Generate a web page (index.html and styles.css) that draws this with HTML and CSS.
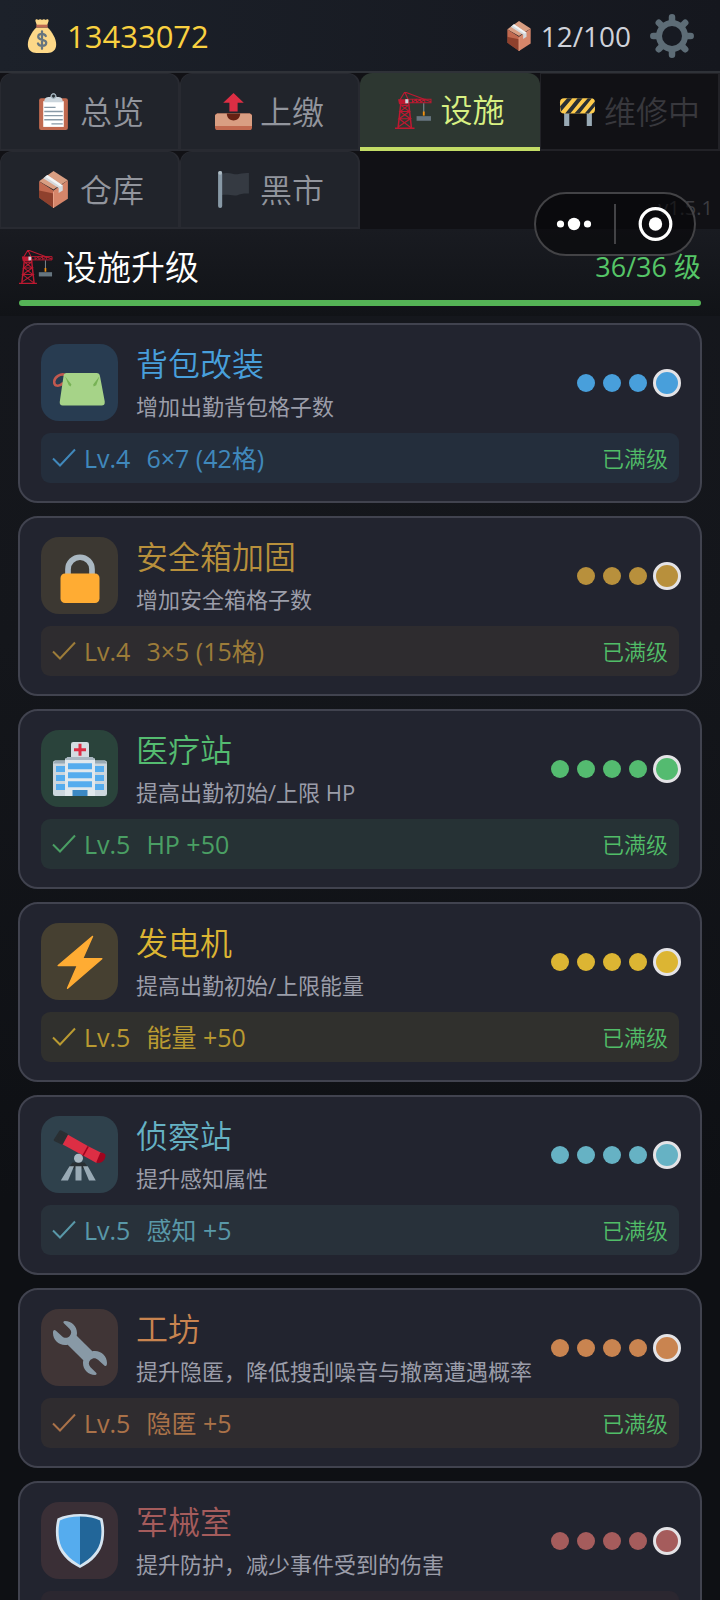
FILE: index.html
```html
<!DOCTYPE html>
<html lang="zh-CN">
<head>
<meta charset="utf-8">
<meta name="viewport" content="width=device-width, initial-scale=1">
<title>设施升级</title>
<link rel="stylesheet" href="styles.css">
</head>
<body>
<svg class="sprite" aria-hidden="true">
  <symbol id="i-money" viewBox="0 0 36 36">
    <path fill="#fdd888" d="M12 9h12c5 5 9 12 9 18 0 6-4 9-9 9H12c-5 0-9-3-9-9 0-6 4-13 9-18z"/>
    <path fill="#fdd888" d="M11 2c0-2 2-2 3-1 1-1 3-1 4 0 1-1 3-1 4 0 1-1 3-1 3 1l-2 6H13z"/>
    <path fill="#bf6952" d="M12 6h12v3H12z"/>
    <path fill="none" stroke="#67757f" stroke-width="2.400" stroke-linecap="round" d="M22 18c-.8-1.700-2.300-2.300-4-2.300-2.200 0-4 1-4 3 0 4.500 8.500 2.200 8.500 6.500 0 2.200-2.200 3.300-4.500 3.300-2 0-3.700-.9-4.300-2.600M18 13v18.500"/>
  </symbol>
  <symbol id="i-box" viewBox="0 0 36 36">
    <path fill="#d99e82" d="M18 0l14 9-14 9L4 10z"/>
    <path fill="#c1694f" d="M4 10l14 9v17L4 26z"/>
    <path fill="#662113" opacity=".55" d="M4 19l14 3v14L4 26z"/>
    <path fill="#d6866a" d="M32 9L18 19v17l14-9z"/>
    <path fill="#d4d9dd" d="M12 4L8 7l15 9.500v5l4-2.500v-5z"/>
    <path fill="#f3f5f6" d="M12 4l-2 1.500L24.500 15l2.500-1z"/>
    <path stroke="#e7a086" stroke-width="1" d="M18 20v16"/>
  </symbol>
  <symbol id="i-gear" viewBox="0 0 44 44">
    <g stroke="#5d6c76" stroke-width="6.500" stroke-linecap="round">
      <path d="M22 3.300v37.400M3.300 22h37.400M8.800 8.800l26.400 26.400M35.200 8.800L8.800 35.200"/>
    </g>
    <circle cx="22" cy="22" r="16" fill="#5d6c76"/>
    <circle cx="22" cy="22" r="10" fill="#171a22"/>
  </symbol>
  <symbol id="i-clip" viewBox="0 0 36 36">
    <rect x="4" y="5" width="28" height="31" rx="2" fill="#c1694f"/>
    <path fill="#fff" d="M8 8h20v25H8z"/>
    <path fill="#ccd6dd" d="M9 9c0-4 2-5 5-5h1c0-5 6-5 6 0h1c3 0 5 1 5 5z"/>
    <circle cx="18" cy="3" r="2" fill="#292f33" stroke="#99aab5"/>
    <path stroke="#8899a6" stroke-width="1.300" d="M9 14h11M9 18h18M9 22h18M9 26h18M16 30h11"/>
  </symbol>
  <symbol id="i-outbox" viewBox="0 0 36 36">
    <rect y="20" width="36" height="16" rx="2.500" fill="#c1694f"/>
    <path fill="#d99e82" d="M2 20h32l2 2v10H0V22z"/>
    <path fill="#662113" d="M11.500 20h13c0 9-13 9-13 0z"/>
    <path fill="#dd2e44" d="M18 0l10 9.500h-6V18h-8V9.500H8z"/>
  </symbol>
  <symbol id="i-crane" viewBox="0 0 36 36">
    <g fill="none" stroke="#be1931">
      <path stroke-width="1.500" d="M6 8L3 35M13 8l3 27M0 35.300h19"/>
      <path stroke-width="1.100" d="M6 13h7l-8 6h9L4 26h11L3 34M5 19l10 7M4 26l12 9M6 13l8 6M9.500 0L4 9M9.500 0L35 9.500M9.500 0l4 9"/>
      <path stroke-width="1" d="M13 7h22v3.500H13M17 7v3l4-3v3l4-3v3l4-3v3"/>
    </g>
    <path fill="#be1931" d="M3 7h9v5H4z"/>
    <path fill="#ccd6dd" d="M10 7h3v4h-3z"/>
    <path stroke="#99aab5" stroke-width=".8" d="M28 11v9"/>
    <path stroke="#f4900c" stroke-width="1.800" d="M28 19v4"/>
    <path fill="#66757f" d="M21 23.500h14V28H21z"/>
  </symbol>
  <symbol id="i-barrier" viewBox="0 0 36 36">
    <path fill="#99aab5" d="M5 19h5v13H5zM27 19h5v13h-5z"/>
    <rect x="1" y="5" width="34" height="15" rx="4" fill="#ffcc4d"/>
    <path fill="#292f33" d="M8 5h5L2 18l-1-5zM18 5h5L11 20H6zM28 5h4L20 20h-5zM35 8v5l-6 7h-4z"/>
  </symbol>
  <symbol id="i-flag" viewBox="0 0 36 36">
    <path fill="#353a42" d="M6 3c8-3 12 1 17 0 4-1 7-1 10-1v20c-5 0-7 0-11 1.500-5 1-9-1-16 0z"/>
    <rect x="3" width="4" height="36" rx="2" fill="#8899a6"/>
    <circle cx="5" cy="1.800" r="1.800" fill="#aebbc3"/>
  </symbol>
  <symbol id="i-pouch" viewBox="0 0 36 36">
    <path fill="none" stroke="#c1594f" stroke-width="1.700" d="M8 12.500c-3-1-7 1.500-7.200 4.500-.2 3 3 4 6 1"/>
    <path fill="#a6d388" d="M9 11.300h20c1.500 0 2 .7 2.300 2l3.200 17c.2 2-.8 2.700-2 2.700H6.500c-1.500 0-2.200-1-2-2.500l2.500-17c.2-1.500.8-2.200 2-2.200z"/>
    <path fill="#77b255" d="M8 13.500l4.300 5.500-.6 1.300-1.200-.8zM31 13.500L26.800 19l.3 1.300 1.700-.8z"/>
  </symbol>
  <symbol id="i-lock" viewBox="0 0 36 36">
    <path fill="none" stroke="#aab8c2" stroke-width="3.800" d="M10 18v-4.500a8 8 0 0 1 16 0V18"/>
    <rect x="5" y="16.300" width="26" height="19.700" rx="3" fill="#ffac33"/>
  </symbol>
  <symbol id="i-hospital" viewBox="0 0 36 36">
    <rect x="12" width="12" height="14" rx="1.500" fill="#d5dce1"/>
    <path fill="#dd2e44" d="M17 1.200h2v3h3v2h-3v3h-2v-3h-3v-2h3z"/>
    <rect y="12.300" width="36" height="23.700" rx="1.500" fill="#ccd6dd"/>
    <path fill="#99aab5" d="M1.500 12.300h33l1.500 2H0z"/>
    <path fill="#e1e8ed" d="M8 11h20v25H8z"/>
    <path fill="#aab8c2" d="M9.500 10h17l1.500 2H8z"/>
    <path fill="#55acee" d="M2 16h6v4H2zM2 22h6v4H2zM2 28h6v4H2zM28 16h6v4h-6zM28 22h6v4h-6zM28 28h6v4h-6zM10 14.200h16v4H10zM10 20.200h16v4H10zM10 26.200h16v4H10z"/>
    <path fill="#3b88c3" d="M13 32h10v4H13z"/>
  </symbol>
  <symbol id="i-bolt" viewBox="0 0 36 36">
    <path fill="#ffac33" stroke="#ffac33" stroke-linejoin="round" d="M26.300 1L3.500 20.300H16.300L9.700 35.500 32.500 15.800H19.700z"/>
  </symbol>
  <symbol id="i-scope" viewBox="0 0 36 36">
    <path stroke="#292f33" stroke-width="2" stroke-linejoin="round" fill="#292f33" d="M5 2.500L9 4.500 5.800 10 1.500 8z"/>
    <path fill="#dd2e44" d="M10 4.500l13.500 7.700L20 18.400 6.500 11z"/>
    <path fill="#dd2e44" d="M23.500 12.200l9 4.500-3.500 6.600-9-4.900z"/>
    <path stroke="#a0041e" d="M23.500 12.200L20 18.400"/>
    <path fill="#a0041e" d="M31.500 16.500c3 0 4 1 3.300 3-.6 2.500-3 4.500-6 3.500z"/>
    <path fill="#292f33" d="M13 23h8l3 4H10z"/>
    <circle cx="17" cy="20.200" r="3" fill="#aab8c2"/>
    <path fill="#99aab5" d="M11 25.500h3L10 35H5.200zM15 25.500h4V35h-4zM20 25.500h3.200L28.500 35h-4.500z"/>
  </symbol>
  <symbol id="i-wrench" viewBox="0 0 36 36">
    <path fill="#8899a6" d="M28 20c-.6 0-1.200.1-1.800.2L15.800 9.800c.1-.6.200-1.200.200-1.800 0-4.400-3.600-8-8-8-1.200.1-1.400 1-.6 1.700L11 5.200c1.500 1.500 1.500 3.300 0 4.900-1.600 1.500-3.500 1.500-5 0L1.800 6.400C.8 5.700 0 6 0 8c0 4.400 3.600 8 8 8 .6 0 1.200-.1 1.800-.2l10.400 10.400c-.1.600-.2 1.200-.2 1.800 0 4.400 3.600 8 8 8 1.200-.1 1.400-1 .6-1.700L25 30.800c-1.500-1.500-1.500-3.300 0-4.900 1.600-1.500 3.500-1.500 5 0l4.200 3.700c1 .7 1.800.4 1.800-1.600 0-4.400-3.600-8-8-8z"/>
  </symbol>
  <symbol id="i-shield" viewBox="0 0 36 36">
    <path fill="#d5e4f0" d="M18 0c6 0 11 1 15 3 1 4 1.500 8 .7 14C32.500 26 26 32 18 36 10 32 3.500 26 2.300 17 1.500 11 2 7 3 3c4-2 9-3 15-3z"/>
    <path fill="#226699" d="M18 1.700c5.500 0 10 1 13.400 2.600.9 4 1.200 7.700.5 12.400C30.800 24.500 25 30 18 34z"/>
    <path fill="#55acee" d="M18 1.700C12.500 1.700 8 2.700 4.600 4.300c-.9 4-1.200 7.700-.5 12.400C5.200 24.500 11 30 18 34z"/>
  </symbol>
  <symbol id="i-tick" viewBox="0 0 24 24">
    <path fill="none" stroke="currentColor" stroke-width="2" d="M1 12.500l7 7L23 3.500"/>
  </symbol>
</svg>

<div class="app">
  <header class="topbar">
    <div class="money"><svg class="money-icon"><use href="#i-money"/></svg><span>13433072</span></div>
    <div class="stock"><svg class="stock-icon"><use href="#i-box"/></svg><span>12/100</span></div>
    <button class="settings" aria-label="设置"><svg class="gear"><use href="#i-gear"/></svg></button>
  </header>

  <nav class="tabs">
    <button class="tab"><svg class="emoji"><use href="#i-clip"/></svg>总览</button>
    <button class="tab"><svg class="emoji"><use href="#i-outbox"/></svg>上缴</button>
    <button class="tab active"><svg class="emoji"><use href="#i-crane"/></svg>设施</button>
    <button class="tab disabled" disabled><svg class="emoji"><use href="#i-barrier"/></svg>维修中</button>
    <button class="tab"><svg class="emoji"><use href="#i-box"/></svg>仓库</button>
    <button class="tab"><svg class="emoji"><use href="#i-flag"/></svg>黑市</button>
    <span class="version">v1.5.1</span>
  </nav>

  <section class="summary">
    <div class="summary-row">
      <h1 class="heading"><svg class="heading-icon"><use href="#i-crane"/></svg>设施升级</h1>
      <span class="total">36/36 级</span>
    </div>
    <div class="progress"></div>
  </section>

  <main class="list">
    <article class="card blue">
      <div class="card-top">
        <div class="badge"><svg class="badge-icon"><use href="#i-pouch"/></svg></div>
        <div class="info"><h2 class="name">背包改装</h2><p class="desc">增加出勤背包格子数</p></div>
        <div class="dots"><i class="dot"></i><i class="dot"></i><i class="dot"></i><i class="dot now"></i></div>
      </div>
      <div class="status"><span class="effect"><svg class="tick"><use href="#i-tick"/></svg><span class="level">Lv.4</span><span>6×7 (42格)</span></span><span class="maxed">已满级</span></div>
    </article>
    <article class="card bronze">
      <div class="card-top">
        <div class="badge"><svg class="badge-icon"><use href="#i-lock"/></svg></div>
        <div class="info"><h2 class="name">安全箱加固</h2><p class="desc">增加安全箱格子数</p></div>
        <div class="dots"><i class="dot"></i><i class="dot"></i><i class="dot"></i><i class="dot now"></i></div>
      </div>
      <div class="status"><span class="effect"><svg class="tick"><use href="#i-tick"/></svg><span class="level">Lv.4</span><span>3×5 (15格)</span></span><span class="maxed">已满级</span></div>
    </article>
    <article class="card green">
      <div class="card-top">
        <div class="badge"><svg class="badge-icon"><use href="#i-hospital"/></svg></div>
        <div class="info"><h2 class="name">医疗站</h2><p class="desc">提高出勤初始/上限 HP</p></div>
        <div class="dots"><i class="dot"></i><i class="dot"></i><i class="dot"></i><i class="dot"></i><i class="dot now"></i></div>
      </div>
      <div class="status"><span class="effect"><svg class="tick"><use href="#i-tick"/></svg><span class="level">Lv.5</span><span>HP +50</span></span><span class="maxed">已满级</span></div>
    </article>
    <article class="card yellow">
      <div class="card-top">
        <div class="badge"><svg class="badge-icon"><use href="#i-bolt"/></svg></div>
        <div class="info"><h2 class="name">发电机</h2><p class="desc">提高出勤初始/上限能量</p></div>
        <div class="dots"><i class="dot"></i><i class="dot"></i><i class="dot"></i><i class="dot"></i><i class="dot now"></i></div>
      </div>
      <div class="status"><span class="effect"><svg class="tick"><use href="#i-tick"/></svg><span class="level">Lv.5</span><span>能量 +50</span></span><span class="maxed">已满级</span></div>
    </article>
    <article class="card cyan">
      <div class="card-top">
        <div class="badge"><svg class="badge-icon"><use href="#i-scope"/></svg></div>
        <div class="info"><h2 class="name">侦察站</h2><p class="desc">提升感知属性</p></div>
        <div class="dots"><i class="dot"></i><i class="dot"></i><i class="dot"></i><i class="dot"></i><i class="dot now"></i></div>
      </div>
      <div class="status"><span class="effect"><svg class="tick"><use href="#i-tick"/></svg><span class="level">Lv.5</span><span>感知 +5</span></span><span class="maxed">已满级</span></div>
    </article>
    <article class="card orange">
      <div class="card-top">
        <div class="badge"><svg class="badge-icon"><use href="#i-wrench"/></svg></div>
        <div class="info"><h2 class="name">工坊</h2><p class="desc">提升隐匿，降低搜刮噪音与撤离遭遇概率</p></div>
        <div class="dots"><i class="dot"></i><i class="dot"></i><i class="dot"></i><i class="dot"></i><i class="dot now"></i></div>
      </div>
      <div class="status"><span class="effect"><svg class="tick"><use href="#i-tick"/></svg><span class="level">Lv.5</span><span>隐匿 +5</span></span><span class="maxed">已满级</span></div>
    </article>
    <article class="card red">
      <div class="card-top">
        <div class="badge"><svg class="badge-icon"><use href="#i-shield"/></svg></div>
        <div class="info"><h2 class="name">军械室</h2><p class="desc">提升防护，减少事件受到的伤害</p></div>
        <div class="dots"><i class="dot"></i><i class="dot"></i><i class="dot"></i><i class="dot"></i><i class="dot now"></i></div>
      </div>
      <div class="status"></div>
    </article>
  </main>
</div>

<div class="capsule">
  <button class="capsule-btn" aria-label="更多"><svg class="capsule-icon" viewBox="0 0 40 40" fill="#fff"><circle cx="5.500" cy="20" r="3.600"/><circle cx="19" cy="20" r="6.200"/><circle cx="32.500" cy="20" r="3.600"/></svg></button>
  <button class="capsule-btn" aria-label="关闭"><svg class="capsule-icon" viewBox="0 0 40 40"><circle cx="20.500" cy="20" r="15.300" fill="none" stroke="#fff" stroke-width="3.200"/><circle cx="20.500" cy="20" r="6.700" fill="#fff"/></svg></button>
</div>
</body>
</html>
```
FILE: styles.css
```css
* { box-sizing: border-box; }

body {
  margin: 0;
  background: #0e1014;
  color: #fff;
  font-family: "Open Sans", "Noto Sans CJK SC", sans-serif;
  font-weight: 350;
}

h1, h2, p { margin: 0; font-weight: inherit; }

button {
  margin: 0;
  padding: 0;
  border: 0;
  background: none;
  color: inherit;
  font: inherit;
}

svg { display: block; flex: none; }

.sprite { position: absolute; width: 0; height: 0; }

.app {
  display: flex;
  flex-direction: column;
  height: 100vh;
  background: linear-gradient(#16181e, #14161b 40%, #0e1014 75%);
}

/* Top bar */
.topbar {
  display: flex;
  align-items: center;
  padding: 14px 26px 13px 25px;
  border-bottom: 2px solid #2f3238;
  background: linear-gradient(90deg, #1c212a, #15171e);
  font-weight: 400;
  line-height: 44px;
}

.money { display: flex; align-items: center; gap: 8px; font-size: 31px; color: #f9d140; }
.money-icon { width: 34px; height: 34px; }
.stock { display: flex; align-items: center; gap: 7px; margin-left: auto; font-size: 28px; color: #cfd2da; }
.stock-icon { width: 30px; height: 30px; }
.settings { margin-left: 19px; }
.gear { width: 44px; height: 44px; }

/* Tabs */
.tabs {
  display: grid;
  grid-template-columns: repeat(4, 1fr);
  background: #111115;
}

.tab {
  display: flex;
  align-items: center;
  justify-content: center;
  gap: 8px;
  height: 78px;
  border: 2px solid #282a31;
  border-top-width: 1px;
  border-left-width: 1px;
  border-radius: 12px 12px 0 0;
  background: #21242b;
  color: #92959d;
  font-size: 32px;
  line-height: 44px;
  white-space: nowrap;
}

.emoji { width: 37px; height: 37px; }
.tab.active { border: 0; border-bottom: 4px solid #c3dc66; background: #2d3731; color: #d8f082; }
.tab.disabled { border-radius: 0; border-color: #222227; background: none; color: #38383d; }

.version {
  grid-column: span 2;
  align-self: end;
  padding: 0 7px 6px 0;
  color: #3c3c41;
  font-size: 20px;
  font-weight: 400;
  line-height: 30px;
  text-align: right;
}

/* Summary */
.summary { padding: 13px 19px 10px; background: linear-gradient(#191b21, #111317); }
.summary-row { display: flex; align-items: center; justify-content: space-between; line-height: 50px; }
.heading { display: flex; align-items: center; gap: 10px; font-size: 34px; }
.heading-icon { width: 34px; height: 34px; }
.total { font-size: 27px; font-weight: 400; color: #55c567; }
.progress { height: 6px; margin-top: 8px; border-radius: 3px; background: #55b356; }

/* Facility cards */
.list {
  display: flex;
  flex: 1;
  flex-direction: column;
  gap: 13px;
  min-height: 0;
  padding: 7px 18px 18px;
  overflow-y: auto;
  scrollbar-width: none;
}

.card {
  --tone: #489fdb;
  display: flex;
  flex: none;
  flex-direction: column;
  gap: 12px;
  padding: 19px 21px 18px;
  border: 2px solid #41434f;
  border-radius: 20px;
  background: #22242f;
}

.blue { --tone: #489fdb; --badge: #283c51; --strip: #242e3c; }
.bronze { --tone: #b8903c; --badge: #3c3832; --strip: #2e2c2f; }
.green { --tone: #54bb70; --badge: #2a433b; --strip: #263235; }
.yellow { --tone: #dcb533; --badge: #464031; --strip: #30302d; }
.cyan { --tone: #66b2c4; --badge: #2f414c; --strip: #28313a; }
.orange { --tone: #c98450; --badge: #403536; --strip: #2f2c2f; }
.red { --tone: #a55c5c; --badge: #3a2f36; --strip: #2b2730; }

.card-top { display: flex; align-items: center; gap: 18px; }

.badge {
  display: grid;
  flex: none;
  place-items: center;
  width: 77px;
  height: 77px;
  border-radius: 18px;
  background: var(--badge);
}

.badge-icon { width: 54px; height: 54px; }
.info { display: flex; flex: 1; flex-direction: column; gap: 8px; min-width: 0; }
.name { color: var(--tone); font-size: 32px; line-height: 38px; }
.desc { color: #9b9da9; font-size: 22px; font-weight: 400; line-height: 30px; white-space: nowrap; }

.dots { display: flex; align-items: center; gap: 8px; }
.dot { width: 18px; height: 18px; border-radius: 50%; background: var(--tone); }
.dot.now { width: 28px; height: 28px; margin: 0 -2px; border: 3px solid #e4e3e6; }

.status {
  display: flex;
  align-items: center;
  justify-content: space-between;
  height: 50px;
  padding: 0 11px;
  border-radius: 9px;
  background: var(--strip);
  line-height: 36px;
}

.effect {
  display: flex;
  align-items: center;
  gap: 8px;
  color: var(--tone);
  font-size: 25px;
  font-weight: 400;
  opacity: .8;
}

.level { margin-right: 8px; }
.tick { width: 24px; height: 24px; }
.maxed { color: #51bd68; font-size: 22px; }

/* Floating window controls, laid over the page */
.capsule {
  position: fixed;
  top: 192px;
  right: 24px;
  display: flex;
  align-items: center;
  width: 162px;
  height: 64px;
  border: 2px solid #434346;
  border-radius: 32px;
  background: rgba(6, 6, 9, .6);
}

.capsule-btn { display: grid; flex: 1; place-items: center; height: 40px; }
.capsule-btn + .capsule-btn { border-left: 2px solid #434346; }
.capsule-icon { width: 40px; height: 40px; }
```
